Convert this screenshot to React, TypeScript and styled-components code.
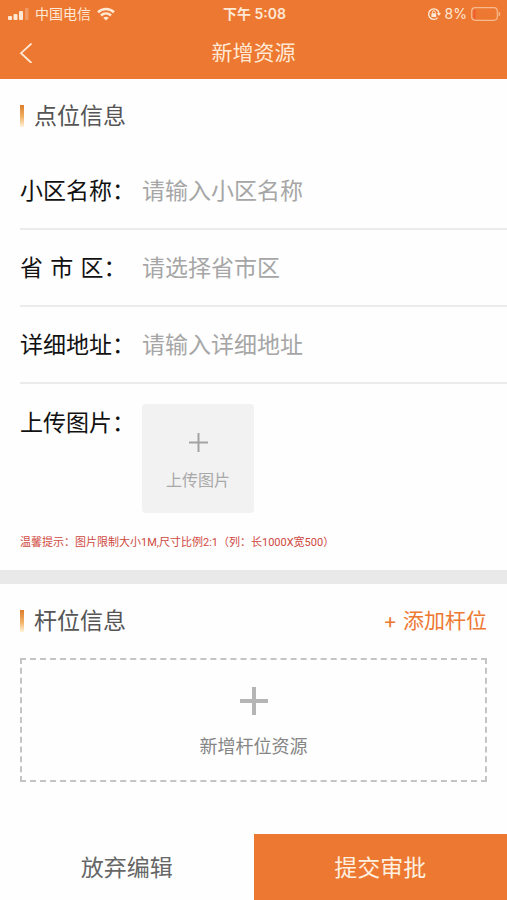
import React from "react";
import styled, { createGlobalStyle, css } from "styled-components";

const ORANGE = "#ed7831";

const GlobalStyle = createGlobalStyle`
  * { box-sizing: border-box; }
  body {
    margin: 0;
    background: #fefefe;
    font-family: Inter, "Noto Sans CJK SC", sans-serif;
  }
  button, input, select { font-family: inherit; }
  button { border: 0; padding: 0; background: none; cursor: pointer; }
`;

const Page = styled.div`
  min-height: 100vh;
  display: flex;
  flex-direction: column;
`;

const Top = styled.header`
  background: ${ORANGE};
  color: #ffe9d6;
`;

const columns = css`
  display: grid;
  grid-template-columns: 1fr auto 1fr;
  align-items: center;
`;

const StatusBar = styled.div`
  ${columns}
  height: 27px;
  padding: 0 6px 0 8px;
  font-size: 14px;
  line-height: 27px;
`;

const StatusGroup = styled.div<{ $end?: boolean }>`
  display: flex;
  align-items: center;
  gap: ${(p) => (p.$end ? 4 : 6)}px;
  justify-content: ${(p) => (p.$end ? "flex-end" : "flex-start")};
`;

const Clock = styled.time`
  font-weight: 600;
`;

const NavBar = styled.nav`
  ${columns}
  height: 52px;
  padding: 0 16px;
`;

const BackButton = styled.button`
  display: flex;
  width: 24px;
  color: #ffe9d6;
`;

const Title = styled.h1`
  margin: 0;
  font-size: 21px;
  line-height: 32px;
  font-weight: 400;
`;

const Section = styled.section`
  padding-left: 20px;
`;

const SectionHead = styled.div`
  display: flex;
  align-items: center;
  justify-content: space-between;
  height: 74px;
  padding-right: 20px;
`;

const Heading = styled.h2`
  display: flex;
  align-items: center;
  gap: 10px;
  margin: 0;
  color: #555;
  font-size: 23px;
  line-height: 32px;
  font-weight: 400;

  &::before {
    content: "";
    width: 4px;
    height: 22px;
    background: linear-gradient(#dc7c2c, #f3b266 55%, #fff3dc);
  }
`;

const Row = styled.div<{ $top?: boolean }>`
  display: flex;
  align-items: ${(p) => (p.$top ? "flex-start" : "center")};
  ${(p) =>
    p.$top
      ? "padding: 20px 20px 21px 0;"
      : "height: 77px; border-bottom: 2px solid #ebebeb;"}
`;

const Label = styled.label<{ $spaced?: boolean }>`
  flex: 0 0 122px;
  color: #111;
  font-size: 23px;
  line-height: 38px;
  white-space: nowrap;
  ${(p) => p.$spaced && 'font-family: "DejaVu Sans", "Noto Sans CJK SC", sans-serif;'}
`;

const field = css`
  flex: 1;
  min-width: 0;
  height: 38px;
  padding: 0;
  border: 0;
  outline: 0;
  background: transparent;
  font-size: 23px;
  line-height: 38px;
`;

const TextField = styled.input`
  ${field}
  color: #333;
  &::placeholder { color: #a6a6a6; opacity: 1; }
`;

const Picker = styled.select`
  ${field}
  appearance: none;
  color: #a6a6a6;
`;

const UploadButton = styled.button`
  display: flex;
  flex-direction: column;
  align-items: center;
  justify-content: center;
  gap: 16px;
  width: 112px;
  height: 109px;
  padding-top: 8px;
  border-radius: 4px;
  background: #f2f2f2;
  color: #a8a8a8;
  font-size: 16px;
  line-height: 24px;
`;

const Hint = styled.p`
  margin: 0;
  padding: 0 20px 19px 0;
  color: #cf4840;
  font-family: Roboto, "Noto Sans CJK SC", sans-serif;
  font-size: 11px;
  line-height: 17px;
`;

const Divider = styled.div`
  height: 14px;
  background: #e9e9e9;
`;

const AddLink = styled.button`
  color: ${ORANGE};
  font-size: 21px;
  line-height: 32px;
`;

const AddPanel = styled.button`
  display: flex;
  flex-direction: column;
  align-items: center;
  justify-content: center;
  gap: 18px;
  width: calc(100% - 20px);
  height: 124px;
  padding-top: 8px;
  border: 2px dashed #c4c4c4;
  color: #858585;
  font-size: 18px;
  line-height: 28px;
`;

const Footer = styled.footer`
  display: grid;
  grid-template-columns: 1fr 1fr;
  margin-top: auto;
`;

const FooterButton = styled.button<{ $primary?: boolean }>`
  height: 66px;
  padding-top: 2px;
  background: ${(p) => (p.$primary ? ORANGE : "transparent")};
  color: ${(p) => (p.$primary ? "#fff0e0" : "#666")};
  font-size: 23px;
  line-height: 32px;
`;

const SignalIcon = () => (
  <svg width="21" height="12" viewBox="0 0 21 12" fill="currentColor" aria-hidden="true">
    <rect x="0" y="8" width="4" height="4" rx="1" />
    <rect x="5.5" y="6" width="4" height="6" rx="1" />
    <rect x="11" y="3" width="4" height="9" rx="1" />
    <rect x="17" y="0" width="3.5" height="12" rx="1" opacity="0.3" />
  </svg>
);

const WifiIcon = () => (
  <svg width="18" height="14" viewBox="0 0 18 14" fill="none" stroke="currentColor" strokeWidth="2.6" aria-hidden="true">
    <path d="M1 5.2C5.5.9 12.5.9 17 5.2" />
    <path d="M4 8.5C6.9 5.8 11.1 5.8 14 8.5" />
    <path d="M9 13.6 6.2 10.8C7.8 9.4 10.2 9.4 11.8 10.8Z" fill="currentColor" stroke="none" />
  </svg>
);

const LockIcon = () => (
  <svg width="14" height="14" viewBox="0 0 14 14" fill="none" stroke="currentColor" aria-hidden="true">
    <path d="M10.7 10.6A5.2 5.2 0 1 1 11.9 6" strokeWidth="1.4" />
    <path d="M9.8 6H14L11.9 9Z" fill="currentColor" stroke="none" />
    <rect x="4.4" y="6.2" width="4.8" height="3.8" rx="0.5" fill="currentColor" stroke="none" />
    <path d="M5.4 6.4V5.2a1.4 1.4 0 0 1 2.8 0v1.2" />
  </svg>
);

const BatteryIcon = () => (
  <svg width="30" height="14" viewBox="0 0 30 14" fill="none" aria-hidden="true">
    <rect x="0.7" y="0.7" width="25.6" height="12.6" rx="3.5" stroke="#f8b98e" strokeWidth="1.2" />
    <rect x="2.5" y="2.5" width="2" height="9" rx="1" fill="#f25a35" />
    <path d="M27.6 4.5C29.8 5.5 29.8 8.5 27.6 9.5Z" fill="#f8b98e" />
  </svg>
);

const PlusIcon = ({ size, weight, color }: { size: number; weight: number; color: string }) => (
  <svg width={size} height={size} viewBox={`0 0 ${size} ${size}`} stroke={color} strokeWidth={weight} aria-hidden="true">
    <path d={`M0 ${size / 2}H${size}M${size / 2} 0V${size}`} />
  </svg>
);

export default function App() {
  return (
    <>
      <GlobalStyle />
      <Page>
        <Top>
          <StatusBar>
            <StatusGroup>
              <SignalIcon />
              <span>中国电信</span>
              <WifiIcon />
            </StatusGroup>
            <Clock>下午 5:08</Clock>
            <StatusGroup $end>
              <LockIcon />
              <span>8%</span>
              <BatteryIcon />
            </StatusGroup>
          </StatusBar>
          <NavBar>
            <BackButton type="button" aria-label="返回">
              <svg width="20" height="20" viewBox="0 0 20 20" fill="none" stroke="currentColor" strokeWidth="1.8">
                <path d="M15.5.5 5 10.2 15.5 20" />
              </svg>
            </BackButton>
            <Title>新增资源</Title>
          </NavBar>
        </Top>

        <Section>
          <SectionHead>
            <Heading>点位信息</Heading>
          </SectionHead>
          <Row>
            <Label htmlFor="community">小区名称：</Label>
            <TextField id="community" placeholder="请输入小区名称" />
          </Row>
          <Row>
            <Label htmlFor="region" $spaced>省 市 区：</Label>
            <Picker id="region">
              <option>请选择省市区</option>
            </Picker>
          </Row>
          <Row>
            <Label htmlFor="address">详细地址：</Label>
            <TextField id="address" placeholder="请输入详细地址" />
          </Row>
          <Row $top>
            <Label htmlFor="upload">上传图片：</Label>
            <UploadButton id="upload" type="button">
              <PlusIcon size={19} weight={2} color="#a3a3a3" />
              <span>上传图片</span>
            </UploadButton>
          </Row>
          <Hint>温馨提示：图片限制大小1M,尺寸比例2:1（列：长1000X宽500）</Hint>
        </Section>

        <Divider />

        <Section>
          <SectionHead>
            <Heading>杆位信息</Heading>
            <AddLink type="button">+ 添加杆位</AddLink>
          </SectionHead>
          <AddPanel type="button">
            <PlusIcon size={28} weight={4} color="#b5b5b5" />
            <span>新增杆位资源</span>
          </AddPanel>
        </Section>

        <Footer>
          <FooterButton type="button">放弃编辑</FooterButton>
          <FooterButton type="button" $primary>提交审批</FooterButton>
        </Footer>
      </Page>
    </>
  );
}
